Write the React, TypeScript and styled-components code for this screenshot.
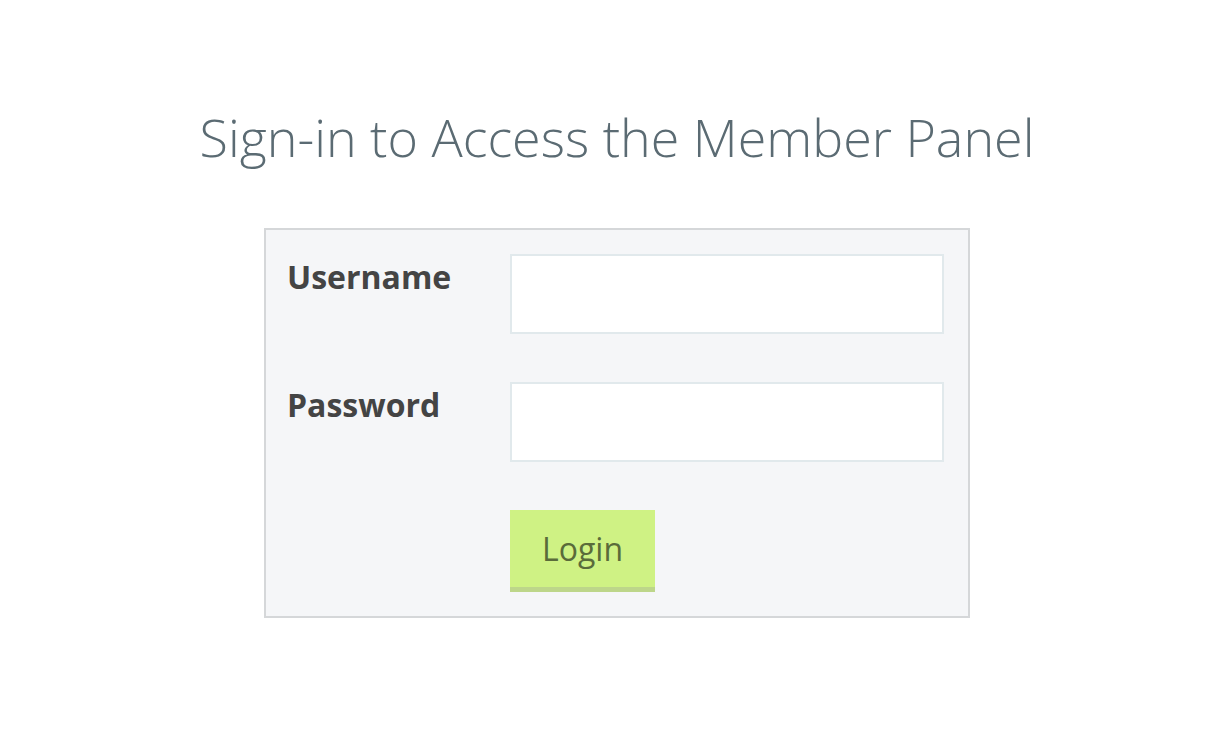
import React from "react";
import styled, { createGlobalStyle } from "styled-components";

const Global = createGlobalStyle`
  html, body { margin: 0; padding: 0; background: #ffffff; }
  body { font-family: "Open Sans", "Liberation Sans", sans-serif; }
  * { box-sizing: border-box; }
`;

const Page = styled.div`
  display: flex;
  flex-direction: column;
  align-items: center;
  padding: 106px 0 0 18px;
`;

const Title = styled.h1`
  margin: 0 0 60px 0;
  font-family: "Open Sans", sans-serif;
  font-weight: 300;
  font-size: 52px;
  line-height: 1.2;
  color: #5b6b73;
  letter-spacing: 0;
`;

const Panel = styled.form`
  width: 706px;
  background: #f5f6f8;
  border: 2px solid #d5d7d9;
  padding: 24px 24px 24px 21px;
  display: grid;
  grid-template-columns: 223px 1fr;
  row-gap: 48px;
`;

const Label = styled.label`
  font-family: "Open Sans", sans-serif;
  font-weight: 700;
  font-size: 32px;
  line-height: 1.2;
  color: #444444;
  padding-top: 4px;
`;

const Input = styled.input`
  height: 80px;
  width: 100%;
  border: 2px solid #e1e9ec;
  background: #ffffff;
  outline: none;
  font-family: "Open Sans", sans-serif;
  font-size: 24px;
  padding: 0 16px;
`;

const Button = styled.button`
  justify-self: start;
  grid-column: 2;
  height: 82px;
  padding: 0 32px;
  background: #cff284;
  border: none;
  border-bottom: 5px solid #bdd68a;
  font-family: "Open Sans", sans-serif;
  font-size: 32px;
  color: #5a6b3a;
  cursor: pointer;
`;

export default function App() {
  return (
    <>
      <Global />
      <Page>
        <Title>Sign-in to Access the Member Panel</Title>
        <Panel onSubmit={(e) => e.preventDefault()}>
          <Label htmlFor="u">Username</Label>
          <Input id="u" type="text" />
          <Label htmlFor="p">Password</Label>
          <Input id="p" type="password" />
          <Button type="submit">Login</Button>
        </Panel>
      </Page>
    </>
  );
}
